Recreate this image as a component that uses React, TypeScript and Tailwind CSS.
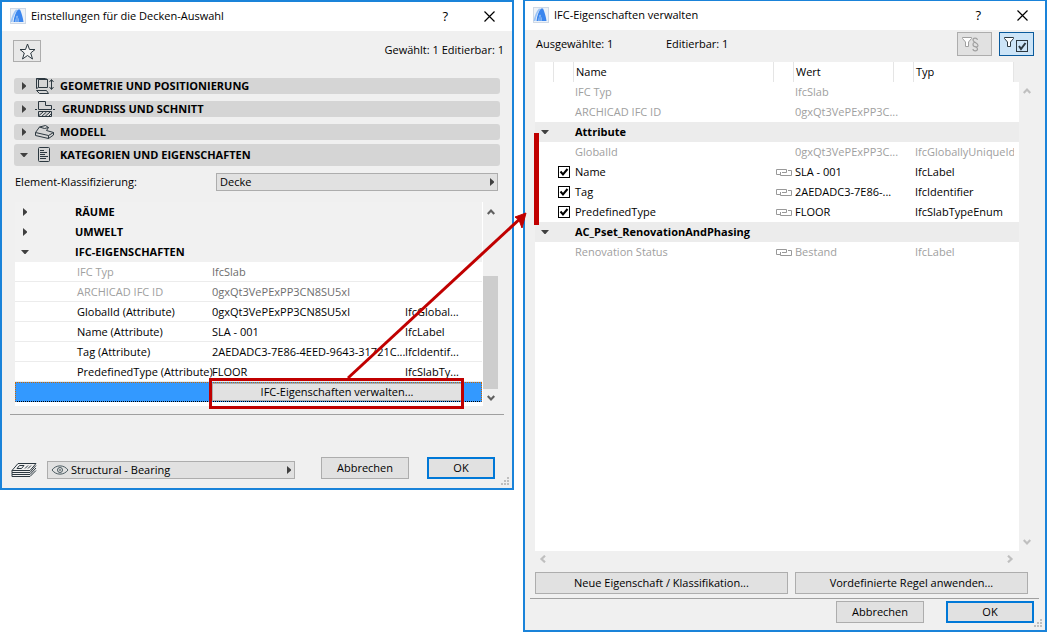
import type { ReactNode } from 'react';

type IfcRow = {
  name: string;
  value: string;
  type?: string;
  dim?: boolean;
};

type PropRow = {
  name: string;
  value?: string;
  type?: string;
  group?: boolean;
  checked?: boolean;
  linked?: boolean;
};

const ifcRows: IfcRow[] = [
  { name: 'IFC Typ', value: 'IfcSlab', dim: true },
  { name: 'ARCHICAD IFC ID', value: '0gxQt3VePExPP3CN8SU5xl', dim: true },
  { name: 'GlobalId (Attribute)', value: '0gxQt3VePExPP3CN8SU5xl', type: 'IfcGlobal...' },
  { name: 'Name (Attribute)', value: 'SLA - 001', type: 'IfcLabel' },
  { name: 'Tag (Attribute)', value: '2AEDADC3-7E86-4EED-9643-31721C...', type: 'IfcIdentif...' },
  { name: 'PredefinedType (Attribute)', value: 'FLOOR', type: 'IfcSlabTy...' },
];

const propRows: PropRow[] = [
  { name: 'IFC Typ', value: 'IfcSlab' },
  { name: 'ARCHICAD IFC ID', value: '0gxQt3VePExPP3C...' },
  { name: 'Attribute', group: true },
  { name: 'GlobalId', value: '0gxQt3VePExPP3C...', type: 'IfcGloballyUniqueId' },
  { name: 'Name', value: 'SLA - 001', type: 'IfcLabel', checked: true, linked: true },
  { name: 'Tag', value: '2AEDADC3-7E86-...', type: 'IfcIdentifier', checked: true, linked: true },
  { name: 'PredefinedType', value: 'FLOOR', type: 'IfcSlabTypeEnum', checked: true, linked: true },
  { name: 'AC_Pset_RenovationAndPhasing', group: true },
  { name: 'Renovation Status', value: 'Bestand', type: 'IfcLabel', linked: true },
];

const Logo = () => (
  <svg className="size-4 shrink-0" viewBox="0 0 16 16" aria-hidden="true">
    <rect x="0.5" y="0.5" width="15" height="15" fill="#edf2f8" stroke="#cfd9e6" />
    <path d="M0.500 14C1.500 9 3.500 4 6 1.500L7.500 2C5 5 3 9 2.500 14Z" fill="#9cc4f6" />
    <path d="M3.500 14C4 9 5.500 4.500 8 1.500L10 1.500C11.500 5 13 10 13.500 14H9C8.500 11 8 9 7 7.500C6 9.500 5.500 12 5.500 14Z" fill="#3b86ee" />
    <path d="M5.500 14C5.500 12 6 9.500 7 7.500C8 9 8.500 11 9 14Z" fill="#6aa6f4" />
  </svg>
);

const Triangle = ({ open = false }: { open?: boolean }) => (
  <svg className="size-2 shrink-0" viewBox="0 0 8 8" aria-hidden="true">
    <path d={open ? 'M0 2H8L4.500 6H3.500Z' : 'M2 0V8L6 4.500V3.500Z'} fill="#404040" />
  </svg>
);

const Chevron = ({ turn, color }: { turn: string; color: string }) => (
  <svg className={`size-2 shrink-0 ${turn}`} viewBox="0 0 8 8" fill="none" aria-hidden="true">
    <path d="M0.700 6L4 2.500L7.300 6" stroke={color} strokeWidth="2.200" />
  </svg>
);

const GeometryIcon = () => (
  <svg className="h-4 w-5" viewBox="0 0 20 16" fill="none" stroke="#2c3840" aria-hidden="true">
    <path d="M3.500 1.500L1.500 0.500V10.500L3.500 9.500M1.500 0.500H10.500L12.500 1.500M3.500 1.500H12.500V9.500H3.500ZM1.500 12.500H11.500L13.500 15.500H4.500Z" />
    <path d="M16.500 2V11M14.500 4L16.500 1.500L18.500 4M14.500 9L16.500 11.500L18.500 9" />
  </svg>
);

const PlanIcon = () => (
  <svg className="h-4 w-[22px]" viewBox="0 0 22 16" fill="none" stroke="#2c3840" aria-hidden="true">
    <path d="M3.500 8.500V0.500H10.500V4.500H16.500V8.500ZM0 8.500H2M18 8.500H20M3.500 10.500H16.500V15.500H3.500Z" />
    <path d="M4 14.500L8 11M6.500 15.500L11.500 11M10 15.500L15 11M13.500 15.500L16.500 12.500" />
  </svg>
);

const ModelIcon = () => (
  <svg className="h-4 w-5" viewBox="0 0 20 16" fill="none" stroke="#2c3840" aria-hidden="true">
    <path d="M0.500 8.500L4.500 3L10.500 1.500L13.500 3.500L11.500 6.500L18.500 8.500V11L13.500 14.500L0.500 11.500ZM0.500 8.500L13.500 11.500L18.500 8.500M13.500 11.500V14.500M4.500 3L9.500 4.500L13.500 3.500" />
  </svg>
);

const CategoryIcon = () => (
  <svg className="h-4 w-5" viewBox="0 0 20 16" fill="none" stroke="#2c3840" aria-hidden="true">
    <rect x="3.500" y="0.500" width="11" height="14" rx="1" />
    <path d="M5 3.500H9M5 5.500H12M5 7.500H10M5 9.500H13M5 11.500H11" />
  </svg>
);

const LinkIcon = () => (
  <svg className="h-2 w-4" viewBox="0 0 16 8" fill="none" stroke="#999" aria-hidden="true">
    <path d="M4 6.500H0.500V1.500H10.500V4.500H6" />
    <path d="M9 7.500H4.500V4M12 2.500H15.500V7.500H6.500M6.500 4V4.500" />
  </svg>
);

const EyeIcon = () => (
  <svg className="h-3 w-[18px]" viewBox="0 0 18 12" fill="none" stroke="#4a5a60" aria-hidden="true">
    <path d="M1 6C5 0.500 13 0.500 17 6C13 11.500 5 11.500 1 6Z" />
    <circle cx="9" cy="6" r="2.500" />
    <circle cx="9" cy="6" r="0.500" />
  </svg>
);

const LayersIcon = () => (
  <svg className="mt-1 h-4 w-[26px] shrink-0" viewBox="0 0 26 16" fill="none" stroke="#2c3840" aria-hidden="true">
    <path d="M7 1.500H25L19 8.500H1ZM1 8.500V10.500H19L25 3.500M1 10.500V12.500H19L25 6M1 12.500V14.500H19L25 8.500" />
    <path d="M8.500 3.500H13L10.500 6.500H6ZM14 6.500L17 3.500M17 6.500L20 3.500" />
  </svg>
);

const Funnel = () => <path d="M0.500 1.500H9.500V2.500L6.500 6V10.500H3.500V6L0.500 2.500Z" fill="#fff" />;

const Grip = () => (
  <svg className="absolute right-[3px] bottom-[3px] size-2" viewBox="0 0 8 8" fill="#bfbfbf" aria-hidden="true">
    <path d="M6 0h2v2H6zM3 3h2v2H3zM6 3h2v2H6zM0 6h2v2H0zM3 6h2v2H3zM6 6h2v2H6z" />
  </svg>
);

const TitleBar = ({ title }: { title: string }) => (
  <header className="flex h-[29px] items-center bg-white pr-[17px] pb-px pl-2">
    <Logo />
    <h1 className="ml-[5px] flex-1 text-[11px]">{title}</h1>
    <button type="button" aria-label="Hilfe" className="mr-9 text-[13px] font-medium">?</button>
    <button type="button" aria-label="Schließen">
      <svg className="size-[11px]" viewBox="0 0 11 11" stroke="#000" aria-hidden="true">
        <path d="M0.500 0.500L10.500 10.500M10.500 0.500L0.500 10.500" strokeWidth="1.200" />
      </svg>
    </button>
  </header>
);

const Section = ({ title, icon, open }: { title: string; icon: ReactNode; open?: boolean }) => (
  <button
    type="button"
    aria-expanded={!!open}
    className={`flex w-full items-center rounded-[3px] bg-[#d5d5d5] pl-1.5 font-bold ${open ? '-mt-[3px] h-[22px]' : 'h-4'}`}
  >
    <Triangle open={open} />
    <span className="mr-[5px] ml-[7px]">{icon}</span>
    {title}
  </button>
);

const PushButton = ({ children, className = '' }: { children: ReactNode; className?: string }) => (
  <button type="button" className={`h-[22px] border border-[#adadad] bg-[#e1e1e1] ${className}`}>
    {children}
  </button>
);

const OkButton = ({ className }: { className: string }) => (
  <button type="button" className={`h-[22px] border-2 border-[#0078d7] bg-[#e1e1e1] ${className}`}>OK</button>
);

const SettingsDialog = () => (
  <section className="relative self-start border-2 border-[#1a83d9] bg-[#f0f0f0]">
    <TitleBar title="Einstellungen für die Decken-Auswahl" />

    <div className="flex items-start justify-between pt-[9px] pr-2 pl-[11px]">
      <button type="button" aria-label="Favoriten" className="flex h-[22px] w-7 items-center justify-center border border-[#adadad] bg-[#e8e8e8]">
        <svg className="size-[17px]" viewBox="0 0 17 17" fill="#f4f4f4" stroke="#2c3840" aria-hidden="true">
          <path d="M8.500 1L10.500 6.500H16L11.700 10L13.500 16L8.500 12.500L3.500 16L5.300 10L1 6.500H6.500Z" />
        </svg>
      </button>
      <p className="leading-5">Gewählt: 1 Editierbar: 1</p>
    </div>

    <div className="mt-4 mr-3 ml-3 flex flex-col gap-[7px]">
      <Section title="GEOMETRIE UND POSITIONIERUNG" icon={<GeometryIcon />} />
      <Section title="GRUNDRISS UND SCHNITT" icon={<PlanIcon />} />
      <Section title="MODELL" icon={<ModelIcon />} />
      <Section title="KATEGORIEN UND EIGENSCHAFTEN" icon={<CategoryIcon />} open />
    </div>

    <div className="mt-[7px] mr-3.5 ml-[13px] flex h-[18px] items-center">
      <label htmlFor="klasse" className="w-[201px]">Element-Klassifizierung:</label>
      <div className="relative flex-1">
        <select id="klasse" className="block h-[18px] w-full appearance-none border border-[#adadad] bg-[#e1e1e1] pl-[3px]">
          <option>Decke</option>
        </select>
        <span className="pointer-events-none absolute top-[5px] right-0.5"><Triangle /></span>
      </div>
    </div>

    <div className="mt-[11px] mr-3.5 ml-[13px] flex">
      <div className="flex-1 border-r border-white bg-white pb-1">
        <table className="w-full table-fixed border-collapse">
          <colgroup>
            <col className="w-[60px]" />
            <col className="w-[135px]" />
            <col />
            <col className="w-[79px]" />
          </colgroup>
          <tbody>
            {['RÄUME', 'UMWELT', 'IFC-EIGENSCHAFTEN'].map((group, i) => (
              <tr key={group} className="h-5 bg-[#f1f1f1]">
                <td className="p-0 pl-1.5"><Triangle open={i === 2} /></td>
                <th colSpan={3} scope="rowgroup" className="p-0 text-left font-bold">{group}</th>
              </tr>
            ))}
            {ifcRows.map((row) => (
              <tr key={row.name} className="h-5 whitespace-nowrap shadow-[inset_0_-1px_0_#ececec]">
                <td className="p-0" />
                <td className={`p-0 pl-0.5 ${row.dim ? 'text-[#a0a0a0]' : ''}`}>{row.name}</td>
                <td className={`p-0 pl-0.5 ${row.dim ? 'text-[#6d6d6d]' : ''}`}>{row.value}</td>
                <td className="p-0 pl-0.5">{row.type}</td>
              </tr>
            ))}
            <tr className="h-5 bg-[#3399ff]">
              <td colSpan={4} className="relative h-5 p-0">
                <div className="flex h-5 items-center border border-dotted border-t-[#cc6600] border-r-[#cc6600] border-b-black border-l-[#cc6600]">
                  <button type="button" className="mr-[19px] ml-[196px] h-[18px] flex-1 border border-[#adadad] bg-[#e1e1e1]">
                    IFC-Eigenschaften verwalten...
                  </button>
                </div>
                <span className="pointer-events-none absolute -top-1 right-[18px] left-[194px] h-[31px] border-3 border-[#c00000]" />
              </td>
            </tr>
          </tbody>
        </table>
      </div>
      <div className="flex w-[15px] flex-col items-center justify-between pt-1.5 pb-1">
        <Chevron turn="" color="#606060" />
        <span className="mt-[54px] h-[113px] w-[15px] bg-[#cdcdcd]" />
        <Chevron turn="rotate-180" color="#606060" />
      </div>
    </div>

    <div className="mx-2 mt-2 border-t border-[#a0a0a0]" />

    <footer className="mt-[42px] mr-[17px] mb-[9px] ml-[9px] flex items-center">
      <LayersIcon />
      <div className="relative mt-1 ml-2.5 flex-1">
        <span className="pointer-events-none absolute top-[3px] left-1"><EyeIcon /></span>
        <select aria-label="Ebene" className="block h-[18px] w-full appearance-none border border-[#adadad] bg-[#e1e1e1] pl-[23px]">
          <option>Structural - Bearing</option>
        </select>
        <span className="pointer-events-none absolute top-[5px] right-0.5"><Triangle /></span>
      </div>
      <PushButton className="ml-[26px] w-[88px]">Abbrechen</PushButton>
      <OkButton className="ml-[18px] w-[68px]" />
    </footer>
    <Grip />
  </section>
);

const PropertiesDialog = () => (
  <section className="relative flex flex-col border-2 border-t border-[#1a83d9] bg-[#f0f0f0]">
    <TitleBar title="IFC-Eigenschaften verwalten" />

    <div className="mt-0.5 mr-[11px] ml-[11px] flex h-6 items-center">
      <p className="w-[130px]">Ausgewählte: 1</p>
      <p className="flex-1">Editierbar: 1</p>
      <button type="button" aria-label="Filter nach Regel" className="h-6 w-[35px] border border-[#adadad] bg-[#e1e1e1]">
        <svg className="ml-1 h-[22px] w-[26px]" viewBox="0 0 26 22" fill="none" stroke="#a0a0a0" aria-hidden="true">
          <g transform="translate(0 3)"><Funnel /></g>
          <path d="M15.500 7C15 4.500 11 4.500 11 7C11 9.500 16 9.500 16 12.500C16 15 11 14 11 11.500C11 9.500 13 9 14 9.500M11 16C11 18.500 15.500 18.500 15.500 16C15.500 14.500 14 14 13 13.500" strokeWidth="1.200" />
        </svg>
      </button>
      <button type="button" aria-label="Nur ausgewählte" className="ml-[7px] h-6 w-[35px] border border-[#0a5a9c] bg-[#cce4f7]">
        <svg className="ml-1 h-[22px] w-[26px]" viewBox="0 0 26 22" fill="none" stroke="#2c3840" aria-hidden="true">
          <g transform="translate(0 3)"><Funnel /></g>
          <rect x="12.500" y="7.500" width="11" height="11" />
          <path d="M15 13L17 16L21.500 10" strokeWidth="2" />
        </svg>
      </button>
    </div>

    <div className="mt-1.5 mr-[11px] ml-2.5 flex flex-1">
      <div className="relative flex-1 bg-white">
        <table className="w-full table-fixed border-collapse">
          <colgroup>
            <col className="w-[19px]" />
            <col className="w-5" />
            <col />
            <col className="w-5" />
            <col className="w-[100px]" />
            <col className="w-5" />
            <col className="w-[100px]" />
            <col className="w-[5px]" />
          </colgroup>
          <thead>
            <tr className="h-5 text-left *:p-0 *:font-normal *:not-last:shadow-[inset_-1px_0_0_#e5e5e5]">
              <td />
              <td />
              <th scope="col"><span className="pl-0.5">Name</span></th>
              <td />
              <th scope="col"><span className="pl-0.5">Wert</span></th>
              <td />
              <th scope="col"><span className="pl-0.5">Typ</span></th>
              <td className="bg-[#f0f0f0]" />
            </tr>
          </thead>
          <tbody>
            {propRows.map((row) =>
              row.group ? (
                <tr key={row.name} className="h-5 bg-[#ececec]">
                  <td className="p-0 pl-1.5"><Triangle open /></td>
                  <td className="p-0" />
                  <th colSpan={6} scope="rowgroup" className="p-0 pl-px text-left font-bold">{row.name}</th>
                </tr>
              ) : (
                <tr key={row.name} className={`h-5 whitespace-nowrap *:p-0 ${row.checked ? '' : 'text-[#a0a0a0]'}`}>
                  <td />
                  <td>
                    {row.checked && (
                      <span className="relative ml-1 block size-3">
                        <input
                          type="checkbox"
                          id={`prop-${row.name}`}
                          defaultChecked
                          className="peer block size-3 appearance-none border border-black bg-white"
                        />
                        <svg className="pointer-events-none absolute inset-0 hidden size-3 peer-checked:block" viewBox="0 0 12 12" fill="none" stroke="#000" strokeWidth="2" aria-hidden="true">
                          <path d="M2.500 5.500L5 8.500L9.500 3" />
                        </svg>
                      </span>
                    )}
                  </td>
                  <td>
                    {row.checked ? <label htmlFor={`prop-${row.name}`} className="pl-px">{row.name}</label> : <span className="pl-px">{row.name}</span>}
                  </td>
                  <td>{row.linked && <span className="block pl-0.5"><LinkIcon /></span>}</td>
                  <td><span className="pl-px">{row.value}</span></td>
                  <td />
                  <td className="overflow-hidden"><span className="pl-px">{row.type}</span></td>
                  <td />
                </tr>
              )
            )}
          </tbody>
        </table>
        {/* marks the attribute group */}
        <span className="absolute top-[71px] -left-px h-[92px] w-[5px] bg-[#c00000]" />
      </div>
      <div className="flex w-[15px] flex-col items-center justify-between pt-[25px] pb-[5px]">
        <Chevron turn="" color="#bfbfbf" />
        <Chevron turn="rotate-180" color="#bfbfbf" />
      </div>
    </div>

    <div className="mr-[31px] ml-3.5 flex h-[21px] items-center justify-between pb-1.5">
      <Chevron turn="-rotate-90" color="#bfbfbf" />
      <Chevron turn="rotate-90" color="#bfbfbf" />
    </div>

    <div className="mr-[17px] ml-2.5 flex gap-[7px]">
      <PushButton className="flex-[253]">Neue Eigenschaft / Klassifikation...</PushButton>
      <PushButton className="flex-[233]">Vordefinierte Regel anwenden...</PushButton>
    </div>

    <div className="mt-1 mr-1.5 ml-[5px] border-t border-[#a0a0a0]" />

    <footer className="mt-0.5 mr-[11px] mb-[7px] flex justify-end gap-[22px]">
      <PushButton className="w-[88px]">Abbrechen</PushButton>
      <OkButton className="w-[88px]" />
    </footer>
    <Grip />
  </section>
);

const App = () => {
  return (
    <main className="relative grid min-h-screen grid-cols-[514fr_524fr] gap-[9px] bg-white pr-[3px] font-['Open_Sans','Noto_Sans',sans-serif] text-[11px] leading-4 text-black">
      <SettingsDialog />
      <PropertiesDialog />

      {/* arrow from the button over to the second dialog */}
      <svg className="pointer-events-none absolute top-[208px] left-[344px] h-[174px] w-[186px]" viewBox="0 0 186 174" fill="none" stroke="#c00000" aria-hidden="true">
        <path d="M4 170L179 8" strokeWidth="3" />
        <path d="M182 5L171 9L175 12L178 20Z" fill="#c00000" />
      </svg>
    </main>
  );
};

export default App;
